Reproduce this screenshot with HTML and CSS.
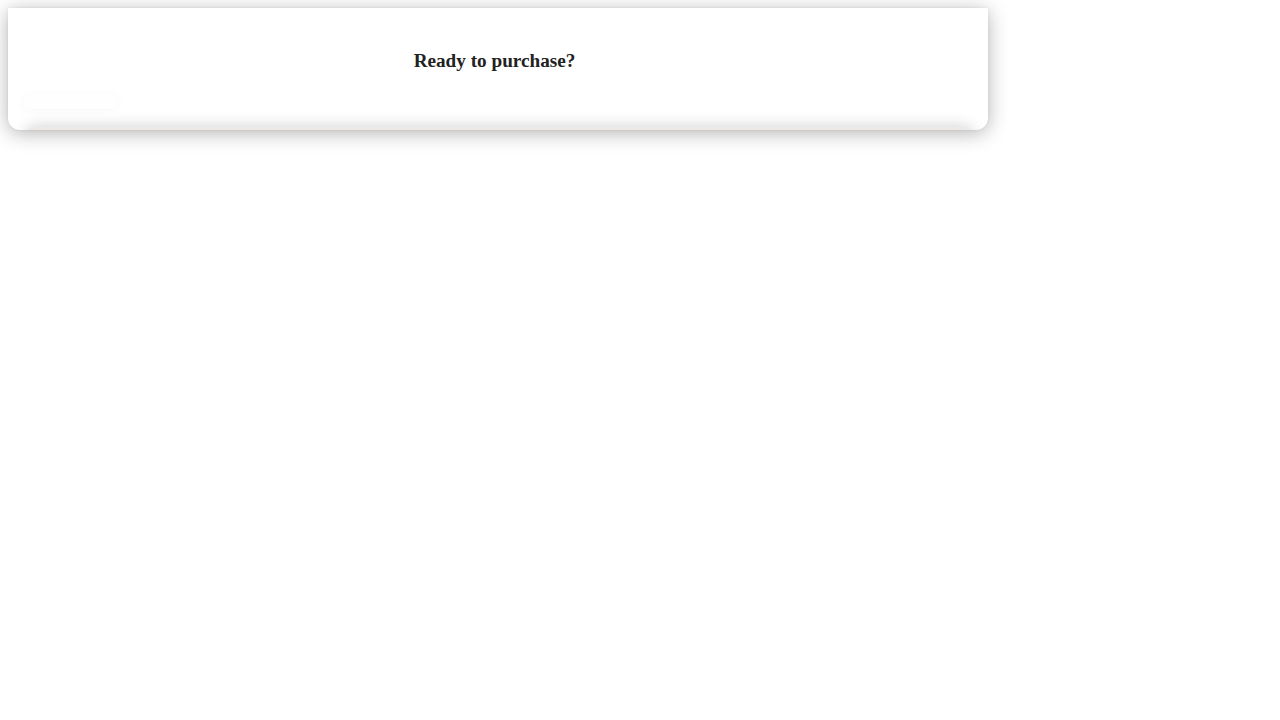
FILE: index.html
```html
<!DOCTYPE html>
<html>
<head>
<meta charset="utf-8">
<link rel="stylesheet" href="styles.css">
</head>
<body>
<div class="page">
  <div class="card">
    <h3 class="title">Ready to purchase?</h3>
    <div class="tab"></div>
    <div class="panel"></div>
  </div>
</div>
</body>
</html>
```
FILE: styles.css
```css
html, body {
  margin: 0;
  background: #fff;
  font-family: "Liberation Serif", serif;
}
.page {
  padding: 8px 8px 24px;
  width: 980px;
}
.card {
  position: relative;
  z-index: 1;
  width: 980px;
  height: 122px;
  box-sizing: border-box;
  background: #fff;
  border-radius: 0 0 12px 12px;
  box-shadow: 0 3px 20px rgba(0, 0, 0, 0.3), 0 0 3px rgba(0, 0, 0, 0.06);
  overflow: hidden;
  padding: 41px 16px 0;
}
.title {
  margin: 0 0 22px;
  font-size: 19.2px;
  line-height: 23px;
  font-weight: bold;
  color: #222;
  text-align: center;
  padding-right: 7px;
}
.tab {
  width: 93px;
  height: 15px;
  background: #fefefe;
  box-shadow: 0 1px 8px rgba(0, 0, 0, 0.04);
  border-radius: 4px;
}
.panel {
  margin: 18px 0 0 3px;
  height: 60px;
  background: #ede9e6;
  box-shadow: 0 0 16px rgba(0, 0, 0, 0.2);
  border-radius: 6px;
}
```
